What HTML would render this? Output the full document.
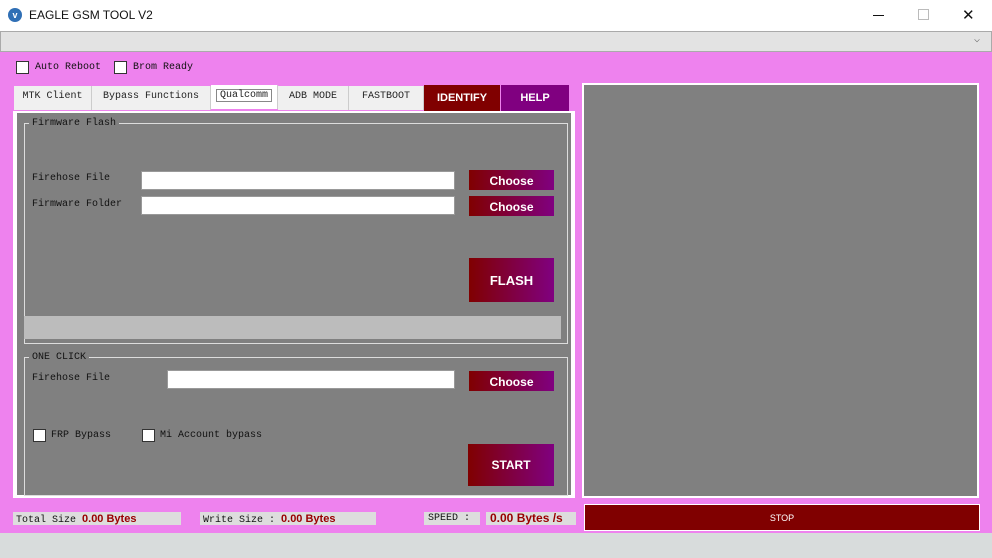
<html><head><style>
body{margin:0;width:992px;height:558px;overflow:hidden;background:#ee82ee;font-family:"Liberation Mono",monospace;font-size:10px;position:relative}
.a{position:absolute}
.btn{position:absolute;background:linear-gradient(90deg,#800000,#800080);color:#fff;font-family:"Liberation Sans",sans-serif;font-weight:bold;text-align:center}
.cb{position:absolute;width:11px;height:11px;background:#fff;border:1px solid #333}
.in{position:absolute;background:#fff;border:1px solid #999;height:17px}
.tab{position:absolute;top:86px;height:24px;line-height:20px;background:#f0f0f0;border-right:1px solid #ccc;text-align:center;color:#222}
.grp{position:absolute;border:1px solid #ddd}
.lbl{position:absolute;color:#111}
</style></head><body>
<div class="a" style="left:0;top:0;width:992px;height:31px;background:#fff"></div>
<div class="a" style="left:8px;top:8px;width:14px;height:14px;border-radius:50%;background:#2f6fb5;color:#fff;font:bold 9px 'Liberation Sans';text-align:center;line-height:14px">v</div>
<div class="a" style="left:29px;top:8px;font:12px 'Liberation Sans',sans-serif;color:#111">EAGLE GSM TOOL V2</div>
<div class="a" style="left:873px;top:15px;width:11px;height:1px;background:#111"></div>
<div class="a" style="left:918px;top:9px;width:9px;height:9px;border:1px solid #bbb"></div>
<div class="a" style="left:962px;top:6px;font:15px 'Liberation Sans';color:#111">✕</div>
<div class="a" style="left:0;top:31px;width:990px;height:19px;background:#e3e3e3;border:1px solid #aaa"></div>
<div class="a" style="left:974px;top:34px;font-size:10px;color:#666">⌵</div>
<div class="cb" style="left:16px;top:61px"></div><div class="lbl" style="left:35px;top:62px">Auto Reboot</div>
<div class="cb" style="left:114px;top:61px"></div><div class="lbl" style="left:133px;top:62px">Brom Ready</div>
<div class="a" style="left:13px;top:111px;width:562px;height:387px;background:#fff"></div>
<div class="tab" style="left:14px;width:77px;line-height:21px">MTK Client</div>
<div class="tab" style="left:92px;width:118px;line-height:21px">Bypass Functions</div>
<div class="tab" style="left:211px;width:66px;background:#fff;top:85px;line-height:22px"><span style="border:1px solid #888;padding:0 3px">Qualcomm</span></div>
<div class="tab" style="left:278px;width:70px;line-height:21px">ADB MODE</div>
<div class="tab" style="left:349px;width:74px;line-height:21px">FASTBOOT</div>
<div class="a" style="left:424px;top:85px;width:76px;height:26px;background:#800000;color:#fff;font:bold 11px 'Liberation Sans';text-align:center;line-height:26px">IDENTIFY</div>
<div class="a" style="left:501px;top:85px;width:68px;height:26px;background:#800080;color:#fff;font:bold 11px 'Liberation Sans';text-align:center;line-height:26px">HELP</div>
<div class="a" style="left:17px;top:113px;width:554px;height:382px;background:#808080"></div>
<div class="grp" style="left:24px;top:123px;width:542px;height:219px"></div>
<div class="lbl" style="left:29px;top:118px;background:#808080;padding:0 3px">Firmware Flash</div>
<div class="lbl" style="left:32px;top:173px">Firehose File</div>
<div class="lbl" style="left:32px;top:199px">Firmware Folder</div>
<div class="in" style="left:141px;top:171px;width:312px"></div>
<div class="in" style="left:141px;top:196px;width:312px"></div>
<div class="btn" style="left:469px;top:170px;width:85px;height:20px;line-height:23px;font-size:12px">Choose</div>
<div class="btn" style="left:469px;top:196px;width:85px;height:20px;line-height:23px;font-size:12px">Choose</div>
<div class="btn" style="left:469px;top:258px;width:85px;height:44px;line-height:46px;font-size:13px">FLASH</div>
<div class="a" style="left:24px;top:316px;width:537px;height:23px;background:#bcbcbc"></div>
<div class="grp" style="left:24px;top:357px;width:542px;height:137px"></div>
<div class="lbl" style="left:29px;top:352px;background:#808080;padding:0 3px">ONE CLICK</div>
<div class="lbl" style="left:32px;top:373px">Firehose File</div>
<div class="in" style="left:167px;top:370px;width:286px"></div>
<div class="btn" style="left:469px;top:371px;width:85px;height:20px;line-height:22px;font-size:12px">Choose</div>
<div class="cb" style="left:33px;top:429px"></div><div class="lbl" style="left:51px;top:430px">FRP Bypass</div>
<div class="cb" style="left:142px;top:429px"></div><div class="lbl" style="left:160px;top:430px">Mi Account bypass</div>
<div class="btn" style="left:468px;top:444px;width:86px;height:42px;line-height:43px;font-size:12px">START</div>
<div class="a" style="left:582px;top:83px;width:397px;height:415px;background:#fff"></div>
<div class="a" style="left:584px;top:85px;width:393px;height:411px;background:#808080"></div>
<div class="a" style="left:13px;top:512px;width:168px;height:13px;background:#ddd"></div>
<div class="lbl" style="left:16px;top:513px">Total Size <span style="color:#900;font:bold 11px 'Liberation Sans'">0.00 Bytes</span></div>
<div class="a" style="left:200px;top:512px;width:176px;height:13px;background:#ddd"></div>
<div class="lbl" style="left:203px;top:513px">Write Size : <span style="color:#900;font:bold 11px 'Liberation Sans'">0.00 Bytes</span></div>
<div class="a" style="left:424px;top:512px;width:56px;height:13px;background:#ddd"></div>
<div class="lbl" style="left:428px;top:513px">SPEED :</div>
<div class="a" style="left:486px;top:512px;width:90px;height:13px;background:#ddd"></div>
<div class="lbl" style="left:490px;top:511px;color:#900;font:bold 12px 'Liberation Sans'">0.00 Bytes /s</div>
<div class="a" style="left:584px;top:504px;width:394px;height:25px;background:#800000;border:1px solid #fff;color:#fff;font:9px 'Liberation Sans';text-align:center;line-height:26px">STOP</div>
<div class="a" style="left:0;top:533px;width:992px;height:25px;background:#d8dcdc"></div>
</body></html>
